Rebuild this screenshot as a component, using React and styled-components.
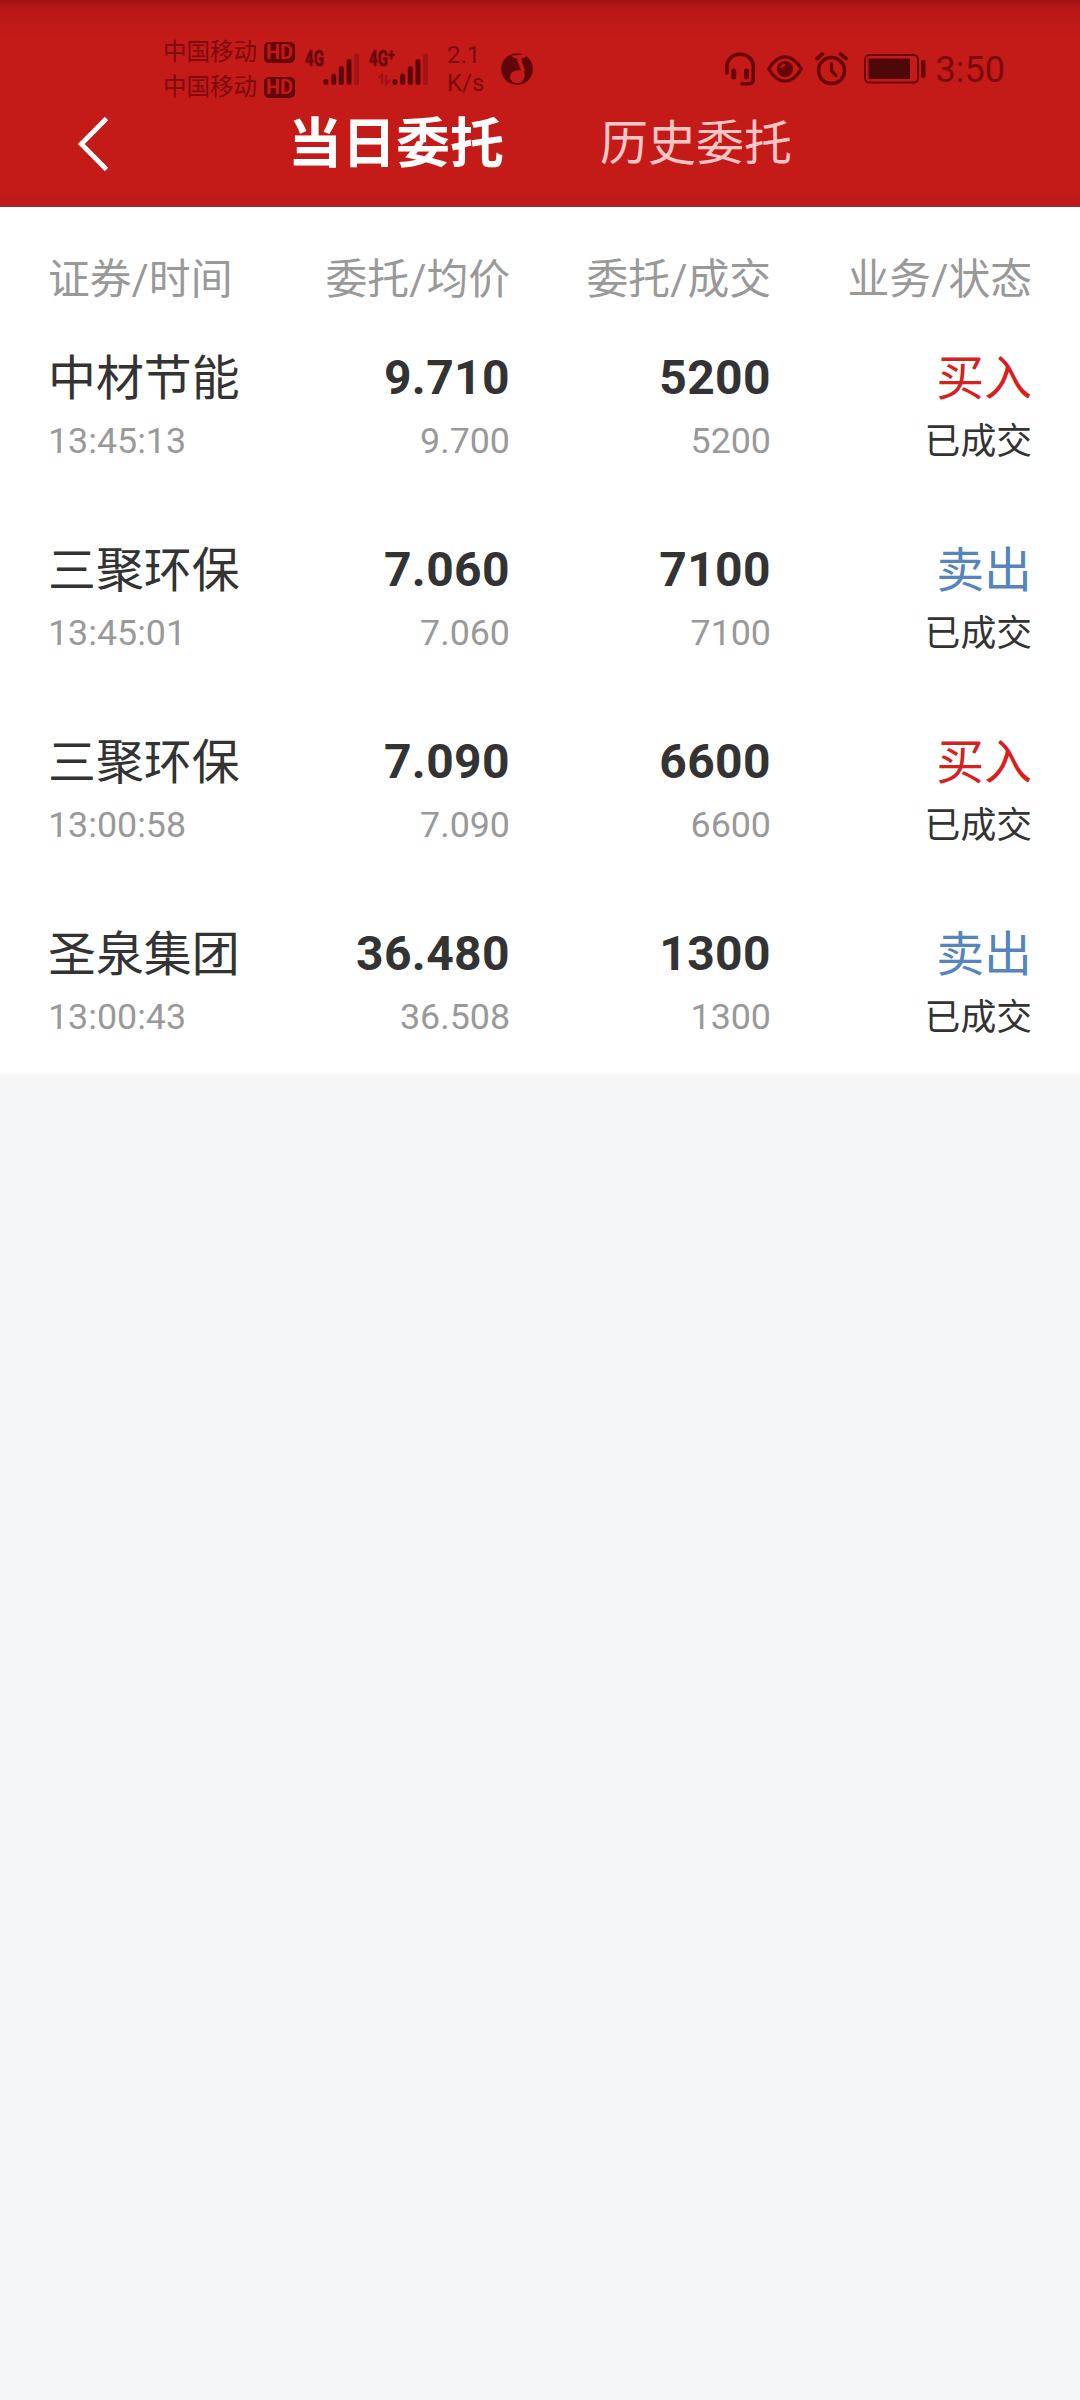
import styled, { createGlobalStyle } from "styled-components";

const orders = [
  {
    name: "中材节能",
    time: "13:45:13",
    price: "9.710",
    avgPrice: "9.700",
    amount: "5200",
    filled: "5200",
    side: "buy",
  },
  {
    name: "三聚环保",
    time: "13:45:01",
    price: "7.060",
    avgPrice: "7.060",
    amount: "7100",
    filled: "7100",
    side: "sell",
  },
  {
    name: "三聚环保",
    time: "13:00:58",
    price: "7.090",
    avgPrice: "7.090",
    amount: "6600",
    filled: "6600",
    side: "buy",
  },
  {
    name: "圣泉集团",
    time: "13:00:43",
    price: "36.480",
    avgPrice: "36.508",
    amount: "1300",
    filled: "1300",
    side: "sell",
  },
];

const columns = ["证券/时间", "委托/均价", "委托/成交", "业务/状态"];

function Signal({ plus }) {
  return (
    <SignalBox>
      <NetworkType>
        4G{plus && <sup>+</sup>}
      </NetworkType>
      <svg width={plus ? 52 : 36} height="34" viewBox={plus ? "-16 0 52 34" : "0 0 36 34"}>
        {plus && (
          <path
            d="M-10 32V23L-13 26M-6 23V32L-2 28"
            stroke="#a31314"
            strokeWidth="2.5"
            fill="none"
          />
        )}
        <g stroke="#5f0608" strokeWidth="5" strokeLinecap="round">
          <path d="M3 29.5V30.5M10.7 24V30.5M18.3 16.5V30.5M26 9.5V30.5" />
          <path d="M33.5 4V30.5" stroke="#a31314" />
        </g>
      </svg>
    </SignalBox>
  );
}

function MusicIcon() {
  return (
    <svg width="32" height="34" viewBox="0 0 32 34">
      <circle cx="16" cy="17" r="15.8" fill="#5f0608" />
      <path
        d="M10 3.5Q20 4 25 0V4.5Q23 6.5 18 6.5L23 19Q24.5 23 23 26L17 21Z"
        fill="#c41a18"
      />
      <path d="M10 3.5L20 3.5L18.5 6.5L15.5 6.5L20 18.5L16 18Z" fill="#5f0608" />
      <path d="M10 3.2Q20 4.5 25.5 0.5L24.5 5Q20 7 13 6Z" fill="#c41a18" />
      <path d="M16 6L20 6L24 19L18 20L21 17Z" fill="#c41a18" />
      <ellipse cx="16.2" cy="24.8" rx="7.2" ry="6.4" fill="#c41a18" />
    </svg>
  );
}

function HeadsetIcon() {
  return (
    <svg width="30" height="34" viewBox="0 0 30 34">
      <g fill="none" stroke="#680507" strokeLinecap="round">
        <path
          d="M2 21V15C2 7 7.5 2.2 15 2.2S28.3 7 28.3 15V27Q28.3 31.8 23.5 31.8H17"
          strokeWidth="3.6"
        />
        <path d="M8.7 19V25M21.5 19V25" strokeWidth="5" />
      </g>
    </svg>
  );
}

function EyeIcon() {
  return (
    <svg width="36" height="28" viewBox="0 0 36 28">
      <path
        d="M1.8 14C6 6.5 11.5 1.9 18 1.9S30 6.5 34.2 14C30 21.5 24.5 26.1 18 26.1S6 21.5 1.8 14Z"
        fill="none"
        stroke="#680507"
        strokeWidth="3.2"
        strokeLinejoin="round"
      />
      <circle cx="18" cy="14" r="8" fill="#680507" />
      <path d="M14 13Q14.5 10 18 9.7" fill="none" stroke="#c41a18" strokeWidth="2" />
    </svg>
  );
}

function AlarmIcon() {
  return (
    <svg width="33" height="34" viewBox="0 0 33 34">
      <g fill="none" stroke="#680507" strokeLinecap="round">
        <circle cx="16.5" cy="18.5" r="13" strokeWidth="3.6" />
        <path d="M2 6.5L7.5 2M31 6.5L25.5 2" strokeWidth="3.6" />
        <path d="M16.5 11.5V19L21 23.5" strokeWidth="3.2" />
      </g>
    </svg>
  );
}

function BatteryIcon() {
  return (
    <svg width="62" height="30" viewBox="0 0 62 30">
      <rect
        x="1"
        y="1"
        width="53"
        height="27.5"
        rx="4.5"
        fill="none"
        stroke="#680507"
        strokeWidth="2"
      />
      <rect x="4.5" y="4.5" width="41.5" height="20.5" rx="1" fill="#4f0809" />
      <rect x="57" y="6" width="4.5" height="18" rx="2" fill="#680507" />
    </svg>
  );
}

function StatusBar() {
  return (
    <StyledStatusBar>
      <Carriers>
        {[1, 2].map((sim) => (
          <Carrier key={sim}>
            中国移动 <HdBadge>HD</HdBadge>
          </Carrier>
        ))}
      </Carriers>
      <Signal />
      <Signal plus />
      <Speed>
        <span>2.1</span>
        <span>K/s</span>
      </Speed>
      <MusicIcon />
      <SystemIcons>
        <HeadsetIcon />
        <EyeIcon />
        <AlarmIcon />
        <Battery>
          <BatteryIcon />
          <Clock>3:50</Clock>
        </Battery>
      </SystemIcons>
    </StyledStatusBar>
  );
}

function OrderRow({ order }) {
  return (
    <StyledOrderRow>
      <Cell>
        <Name>{order.name}</Name>
        <Detail>{order.time}</Detail>
      </Cell>
      <Cell>
        <Figure>{order.price}</Figure>
        <Detail>{order.avgPrice}</Detail>
      </Cell>
      <Cell>
        <Figure>{order.amount}</Figure>
        <Detail>{order.filled}</Detail>
      </Cell>
      <Cell>
        <Side $side={order.side}>{order.side === "buy" ? "买入" : "卖出"}</Side>
        <Status>已成交</Status>
      </Cell>
    </StyledOrderRow>
  );
}

function App() {
  return (
    <>
      <GlobalStyles />
      <Page>
        <Header>
          <StatusBar />
          <NavBar>
            <BackButton aria-label="返回">
              <svg width="32" height="56" viewBox="0 0 32 56">
                <path
                  d="M29.5 2.5L4.3 28L29.5 53.5"
                  fill="none"
                  stroke="#fff"
                  strokeWidth="4.8"
                />
              </svg>
            </BackButton>
            <Tabs>
              <Tab $active>当日委托</Tab>
              <Tab>历史委托</Tab>
            </Tabs>
          </NavBar>
        </Header>
        <Orders>
          <ColumnTitles>
            {columns.map((title) => (
              <span key={title}>{title}</span>
            ))}
          </ColumnTitles>
          {orders.map((order) => (
            <OrderRow key={order.time} order={order} />
          ))}
        </Orders>
      </Page>
    </>
  );
}

export default App;

/****************** styled component ***************/

const GlobalStyles = createGlobalStyle`
  * {
    box-sizing: border-box;
    margin: 0;
    padding: 0;
  }

  body {
    background: #f3f7fa;
    font-family: Roboto, "Noto Sans CJK SC", sans-serif;
  }

  button {
    background: none;
    border: none;
    font-family: inherit;
  }

  svg {
    display: block;
    flex-shrink: 0;
  }
`;

const Page = styled.div`
  background: #f3f7fa;
  min-height: 2400px;
  width: 1080px;
`;

const Header = styled.header`
  background: linear-gradient(
    #a31214 0,
    #b91718 10px,
    #c41a18 36px,
    #c41a18 196px,
    #b81c1b 197px,
    #b81c1b 200px,
    #cc1418 201px
  );
  border-bottom: 2px solid #962a2c;
  height: 207px;
`;

const StyledStatusBar = styled.div`
  align-items: center;
  color: #7c0a0c;
  display: flex;
  height: 102px;
  padding: 35px 75px 0 163px;
`;

const Carriers = styled.div`
  margin-right: 10px;
  padding-top: 3px;
`;

const Carrier = styled.div`
  align-items: center;
  display: flex;
  font-size: 23.5px;
  gap: 7px;
  height: 35px;
  line-height: 35px;
  white-space: nowrap;
`;

const HdBadge = styled.span`
  background: #650508;
  border-radius: 5px;
  color: #c41a18;
  font-size: 20px;
  font-weight: 700;
  height: 21px;
  line-height: 21px;
  text-align: center;
  width: 31px;
`;

const SignalBox = styled.div`
  align-items: flex-end;
  display: flex;
  height: 34px;
  margin-right: 10px;

  svg {
    margin-left: 0;
  }

  & + & svg {
    margin-left: -11px;
  }
`;

const NetworkType = styled.span`
  -webkit-text-stroke: 0.5px #680507;
  align-self: flex-start;
  color: #680507;
  font-size: 21.5px;
  font-weight: 700;
  line-height: 14px;
  transform: scaleX(0.7);
  transform-origin: left;
  white-space: nowrap;
  width: 18px;

  & sup {
    font-size: 17px;
    line-height: 0;
    vertical-align: 5px;
  }
`;

const Speed = styled.div`
  display: flex;
  flex-direction: column;
  font-size: 24px;
  line-height: 28px;
  margin: 1px 17px 0 9px;
`;

const SystemIcons = styled.div`
  align-items: center;
  display: flex;
  gap: 12px;
  margin-left: auto;
`;

const Battery = styled.div`
  align-items: center;
  display: flex;
  gap: 10px;
  margin-left: 4px;
`;

const Clock = styled.span`
  font-size: 36px;
  line-height: 36px;
  padding-top: 2px;
`;

const NavBar = styled.nav`
  align-items: center;
  display: flex;
  height: 84px;
  padding-left: 77px;
`;

const BackButton = styled.button`
  height: 56px;
  width: 32px;
`;

const Tabs = styled.div`
  align-items: center;
  display: flex;
  gap: 96px;
  margin-left: 179px;
  padding-top: 2px;
`;

const Tab = styled.button`
  color: ${({ $active }) => ($active ? "#fff" : "#ffc6c6")};
  font-size: ${({ $active }) => ($active ? 54 : 48)}px;
  font-weight: ${({ $active }) => ($active ? 700 : 400)};
  line-height: ${({ $active }) => ($active ? 84 : 82)}px;
  padding-bottom: ${({ $active }) => ($active ? 0 : 2)}px;
`;

const Orders = styled.main`
  background: #fff;
  border-bottom: 14px solid #f6f6f6;
  color: #333;
`;

const Columns = styled.div`
  display: grid;
  grid-template-columns: 201px repeat(3, 261px);
  padding: 0 48px;
  text-align: right;

  & > :first-child {
    text-align: left;
  }
`;

const ColumnTitles = styled(Columns)`
  color: #999;
  font-size: 41.8px;
  height: 99px;
  line-height: 60px;
  padding-top: 43px;
`;

const StyledOrderRow = styled(Columns)`
  height: 192px;
  padding-top: 38px;
`;

const Cell = styled.div`
  display: flex;
  flex-direction: column;
`;

const Name = styled.span`
  font-size: 47.9px;
  line-height: 70px;
`;

const Figure = styled.span`
  font-size: 48px;
  font-weight: 700;
  letter-spacing: 0.4px;
  line-height: 68px;
  padding-bottom: 2px;
`;

const Side = styled(Name)`
  color: ${({ $side }) => ($side === "buy" ? "#d8201f" : "#5585bd")};
`;

const Detail = styled.span`
  color: #999;
  font-size: 35.8px;
  line-height: 55px;
`;

const Status = styled(Detail)`
  color: #333;
  line-height: 56px;
`;
